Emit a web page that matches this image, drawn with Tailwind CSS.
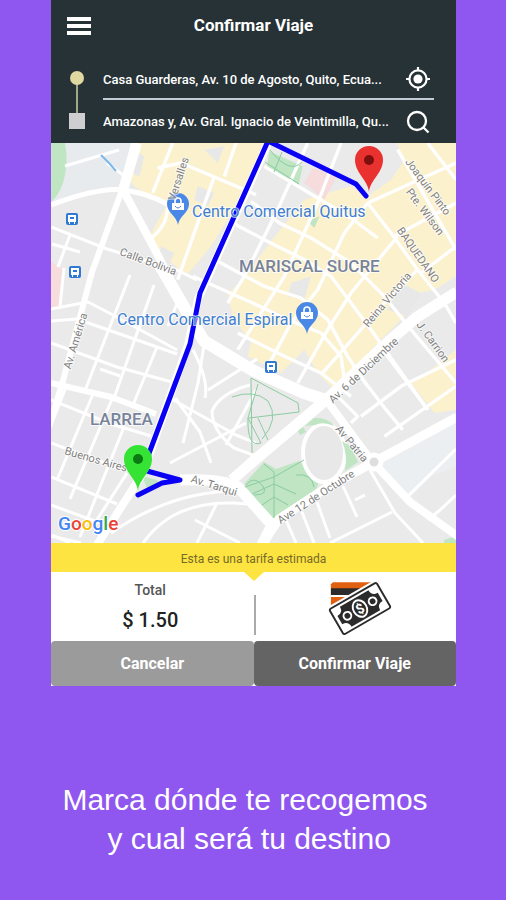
<!DOCTYPE html>
<html lang="es">
<head>
    <meta charset="UTF-8">
    <meta name="viewport" content="width=device-width, initial-scale=1.0">
    <title>Confirmar Viaje</title>
    <script src="https://cdn.jsdelivr.net/npm/@tailwindcss/browser@4"></script>
</head>
<body class="min-h-screen bg-[#8f57ef] font-['Roboto',sans-serif]">
    <main class="ml-[51px] mr-[50px]">
        <!-- Header -->
        <header class="bg-[#263236] text-white pb-1">
            <div class="grid grid-cols-[56px_1fr_56px] items-center h-13">
                <button type="button" aria-label="Menú" class="flex justify-center">
                    <svg class="w-6 h-5" viewBox="0 0 24 20" fill="#fff">
                        <path d="M0 1h24v4H0zM0 8h24v4H0zM0 15h24v4H0z"/>
                    </svg>
                </button>
                <h1 class="text-center text-[17px] font-bold">Confirmar Viaje</h1>
            </div>

            <!-- Origin / destination -->
            <form class="flex pr-[22px]">
                <svg class="w-13 h-[87px] shrink-0" viewBox="0 0 52 87">
                    <path d="M26 26v36" stroke="#a5a888" stroke-width="2"/>
                    <circle cx="26" cy="26" r="7" fill="#dfd8a0"/>
                    <rect x="18" y="61" width="16" height="16" fill="#cfcfd1"/>
                </svg>
                <div class="flex-1 min-w-0">
                    <div class="flex items-center justify-between h-12 pt-2 border-b-2 border-[#c3cbd6]">
                        <input type="text" aria-label="Origen" value="Casa Guarderas, Av. 10 de Agosto, Quito, Ecua..." class="flex-1 min-w-0 h-5 text-[13px] font-medium outline-none">
                        <button type="button" aria-label="Mi ubicación" class="mr-1">
                            <svg class="w-6 h-6" viewBox="0 0 24 24" fill="none" stroke="#fff" stroke-width="2.2">
                                <circle cx="12" cy="12" r="8.6"/>
                                <circle cx="12" cy="12" r="4.6" fill="#fff" stroke="none"/>
                                <path d="M12 0v4M12 20v4M0 12h4M20 12h4"/>
                            </svg>
                        </button>
                    </div>
                    <div class="flex items-center justify-between h-[39px] pt-1">
                        <input type="text" aria-label="Destino" value="Amazonas y, Av. Gral. Ignacio de Veintimilla, Qu..." class="flex-1 min-w-0 h-5 text-[13px] font-medium outline-none">
                        <button type="button" aria-label="Buscar" class="mr-1">
                            <svg class="w-6 h-6" viewBox="0 0 24 24" fill="none" stroke="#fff" stroke-width="2.3">
                                <circle cx="11" cy="11" r="9"/>
                                <path d="M17.5 17.5l5 5"/>
                            </svg>
                        </button>
                    </div>
                </div>
            </form>
        </header>

        <!-- Map -->
        <svg class="block w-full h-auto bg-[#eaeaea]" viewBox="51 143 405 400" role="img" aria-label="Mapa de la ruta">
            <!-- Areas -->
            <path d="M51 143h85l-15 46-26 2-44 14z" fill="#e8ebee"/>
            <path d="M51 143h14q4 20-2 40-4 12-12 19z" fill="#bfe5c3"/>
            <path d="M51 262l11 6-2 38-9 3z" fill="#f6dcdc"/>
            <path d="M378 465l78-46v48l-22 8-26 24z" fill="#eceff2"/>
            <path d="M245 483l19-21 12 7 23-8 20 20-3 9-44 29-9-4-20-21z" fill="#bfe5c3"/>
            <path d="M142 476l15 4 4 5-14 3zM444 540l12-4v7h-12z" fill="#bfe5c3"/>

            <!-- Shopping district, drawn at three times the scale -->
            <svg x="51" y="143" width="405" height="400" viewBox="0 0 1215 1200">
                <g fill="#fbf1cd">
                    <path d="M255 0H640L555 190 480 310 405 400 290 290 345 190 250 130 235 110z"/>
                    <path d="M1215 0H1040L1055 60 1020 110 950 160 900 130 760 170 680 270 650 310 555 430 530 450 545 520 600 600 590 640 690 690 760 620 800 690 850 740 980 600 1060 520 1100 450 1150 440 1215 400z"/>
                    <path d="M1080 720L1140 680 1215 620V800L1150 810z"/>
                </g>
                <path d="M250 20l30 20-15 60-25-10zM440 130l50 20-20 40-40-20zM330 310l40 20-20 40-30-10zM460 20l60-10-20 50zM720 420l60-20-20 70-50-10zM1050 420l60 30-40 70-60-20z" fill="#e8e8e8"/>
                <path d="M785 75l75 20-40 75-60-50z" fill="#f6dcdc"/>
                <path d="M655 25l100 45-12 55-95-50zM770 235l35-15-15 35z" fill="#bfe5c3"/>
                <g fill="none" stroke="#fff" stroke-width="10" stroke-linejoin="round">
                    <path d="M320 75l70-15 95 40 130 55M365 0l-60 150M490 100l-110 310M350 190q0 60-55 100M555 0l-35 100"/>
                    <path d="M640 70l110 65 150 90 80 60M600 175l85 65 95 45 120 75 100 100 80 100 135 160M545 240l95 50 120 60 80 50 60 80 60 80 170 240M500 355l140 75 110 35 80 65 60 110 60 90M425 400l180 80 105 50 100 40 60 70 10 70M560 570l140 70 110 50 90 70"/>
                    <path d="M950 180l70 90 80 110 80 100 35 60M1040 20l175 300M1130 0l85 110"/>
                    <path d="M870 0l-70 180-100 220-140 220M770 0l-90 200-100 200-50 80M950 180l-70 90-80 170-80 100-80 150M1040 280l-140 170-70 110-90 160M1100 380l-100 100-190 215M950 180l265-120M1030 280l185-100M1110 390l105-80"/>
                    <path d="M1215 650l-165 80-120 90M1215 730l-215 150M980 600l150 200M905 670l100 130 50 60M860 760l60 60-20 20"/>
                </g>
            </svg>

            <!-- Streets -->
            <g fill="none" stroke="#fff" stroke-width="3" stroke-linejoin="round">
                <path d="M51 227l56 22 70 21 20 10M51 309l37-7 29 15 60 33M51 321l26-2 40 14 60 21M51 343l66 24 55 15M52 244l28 8M100 369l20 7"/>
                <path d="M70 235l-12 32M64 268l-4 38M130 275l-44 113M154 285l-41 116M157 347l-24 58M180 296l-12 30M107 163l16 12M65 166l54-16"/>
                <path d="M193 350q16 30 12 48M208 390l49-31M250 385q-30 8-38 26 0 20 22 37l22 8M175 398l25 34 11 31M256 443l-20-8-68-38M204 345l-6 38-15 60M226 445l30-55M170 463l76-40"/>
                <path d="M51 400l60 24 40 12M51 443l75 28M51 477l66 27M51 505l60 22M93 394l-36 86M112 399l-42 100M124 427l-44 110M127 473l-34 53M66 387l-15 38"/>
                <path d="M111 533q60-42 126-42M143 543q30-42 90-40l17 1M195 520l45 23M217 503l-20 40M70 543l-18-8"/>
                <path d="M343 486l14 31M355 500l10-5M317 502l13 36M302 512l12 31M286 520l10 23M392 512l-62 31M370 470l25 43 28 30M408 496l48-47M428 520l12-10 16-15M51 536l30 7"/>
            </g>
            <g fill="none" stroke="#fff" stroke-linejoin="round">
                <path d="M51 205q48-18 72-15t44 14" stroke-width="5"/>
                <path d="M134 143l-12 47-30 82-28 105-15 50" stroke-width="6"/>
                <path d="M137 143l-14 47" stroke-width="10"/>
                <path d="M123 190l30 56 31 60" stroke-width="8"/>
                <path d="M158 262l26 45 20 34 50 30 50 22 25 8" stroke-width="12"/>
                <path d="M325 398l45 61 40 43 50 36" stroke-width="8"/>
                <path d="M51 383l60 14 45 17" stroke-width="6"/>
                <path d="M268 143l-70 156-10 46-45 128-48 75" stroke-width="8"/>
                <path d="M457 292l-40 25-28 24-62 58-77 65-18 16" stroke-width="11"/>
                <path d="M457 417l-83 45-48 26-47 31-16 24" stroke-width="9"/>
                <path d="M180 480q40-2 58 7l34 38-10 20" stroke-width="11"/>
                <ellipse cx="324" cy="453" rx="21" ry="29" fill="#e8e8e8" stroke-width="4"/>
                <circle cx="374" cy="462" r="7" fill="#dedede" stroke-width="5"/>
            </g>
            <!-- Green strips round the stadium -->
            <path d="M305 426l9-8q14-1 20 8-11-5-19-1zM298 431l5-4 3 5-6 3zM342 441l9 6 7 15-13 9q3-16-3-30z" fill="#bfe5c3"/>
            <!-- Paths inside the parks -->
            <g fill="none" stroke="#8ccba2" stroke-width="1">
                <path d="M251 378l1 75M251 378l47 25 1 9-50 6M258 384l-10 34q-1 30 13 25l-13-25M232 397q22-8 36 4 12 18-6 38M258 418l10 22"/>
                <path d="M264 464l10 8v46M245 487l29-10 30-17M252 494l22-10 22 10M262 505l12-8 14 8M296 475q16-2 18 12M246 485q8-10 16 0t-8 10M270 150q20 25 32 12M265 162l34 22M282 152l-8 20"/>
            </g>
            <path d="M101 155l8 8 7 8" stroke="#7db8ec" stroke-width="2" fill="none"/>

            <!-- Transit stops -->
            <defs>
                <g id="stop">
                    <rect x="-6" y="-6" width="12" height="12" rx="2" fill="#2f79d3"/>
                    <path d="M-4-4h8v7h-1v2h-1v-2h-4v2h-1v-2h-1z" fill="#fff"/>
                    <path d="M-2-2h4v2h-4z" fill="#2f79d3"/>
                </g>
                <g id="shop">
                    <path d="M0 20C-1 11-11 8-11-1a11 11 0 0122 0C11 8 1 11 0 20z" fill="#4a88e8"/>
                    <path d="M-6-2H6v7H-6z" fill="#fff"/>
                    <path d="M-3-2v-2a3 3 0 016 0v2" fill="none" stroke="#fff" stroke-width="1.6"/>
                    <path d="M-3 1q3 4 6 0" fill="none" stroke="#4a88e8"/>
                </g>
                <path id="pin" d="M0 32C-1 20-14 13-14 0a14 14 0 0128 0C14 13 1 20 0 32z"/>
            </defs>
            <use href="#stop" x="72" y="219"/>
            <use href="#stop" x="75" y="272"/>
            <use href="#stop" x="271" y="367"/>
            <use href="#shop" x="178" y="205"/>
            <use href="#shop" x="307" y="314"/>

            <!-- Route -->
            <path d="M366 196l-10-12-88-43-68 152-10 51-42 112M147 471l33 9-18 3-24 12" fill="none" stroke="#0a00f5" stroke-width="5" stroke-linejoin="round" stroke-linecap="round"/>

            <!-- Street names -->
            <g fill="#808080" font-size="11" stroke="#fff" stroke-opacity="0.7" stroke-width="2" paint-order="stroke" text-anchor="middle">
                <text transform="translate(182 180) rotate(-72)">Versalles</text>
                <text transform="translate(147 265) rotate(20)">Calle Bolivia</text>
                <text transform="translate(79 342) rotate(-73)">Av. América</text>
                <text transform="translate(95 463) rotate(16)">Buenos Aires</text>
                <text transform="translate(213 489) rotate(17)">Av. Tarqui</text>
                <text transform="translate(318 500) rotate(-33)">Ave 12 de Octubre</text>
                <text transform="translate(349 446) rotate(50)">Av Patria</text>
                <text transform="translate(366 373) rotate(-43)">Av. 6 de Diciembre</text>
                <text transform="translate(390 302) rotate(-50)">Reina Victoria</text>
                <text transform="translate(430 344) rotate(54)">J. Carrion</text>
                <text transform="translate(415 257) rotate(55)">BAQUEDANO</text>
                <text transform="translate(422 214) rotate(53)">Pte. Wilson</text>
                <text transform="translate(425 189) rotate(53)">Joaquín Pinto</text>
            </g>
            <g fill="#77839a" font-size="17" font-weight="500" stroke="#fff" stroke-opacity="0.7" stroke-width="2" paint-order="stroke">
                <text x="239" y="272">MARISCAL SUCRE</text>
                <text x="90" y="425">LARREA</text>
            </g>
            <g fill="#3f7fd0" font-size="16" stroke="#fff" stroke-opacity="0.7" stroke-width="2" paint-order="stroke">
                <text x="192" y="217">Centro Comercial Quitus</text>
                <text x="117" y="325">Centro Comercial Espiral</text>
            </g>

            <!-- Pins -->
            <use href="#pin" x="369" y="160" fill="#e9322f"/>
            <circle cx="369" cy="160" r="5" fill="#7d100e"/>
            <use href="#pin" x="138" y="459" fill="#35e335"/>
            <circle cx="138" cy="459" r="5" fill="#0c7a12"/>

            <text x="58" y="530" font-size="19" font-weight="500" stroke="#fff" stroke-width="2" paint-order="stroke"><tspan fill="#4285f4">G</tspan><tspan fill="#ea4335">o</tspan><tspan fill="#fbbc05">o</tspan><tspan fill="#4285f4">g</tspan><tspan fill="#34a853">l</tspan><tspan fill="#ea4335">e</tspan></text>
        </svg>

        <!-- Fare -->
        <section class="bg-white">
            <p class="relative h-[29px] bg-[#fee440] text-center text-xs leading-8 text-[#756a2c]">
                Esta es una tarifa estimada
                <svg class="absolute top-full left-1/2 -translate-x-1/2 w-5 h-[9px]" viewBox="0 0 20 9" fill="#fee440"><path d="M0 0h20L10 9z"/></svg>
            </p>
            <div class="grid grid-cols-2 h-[69px]">
                <div class="flex flex-col items-center pt-2 pr-1">
                    <span class="text-sm leading-5 font-medium text-[#555]">Total</span>
                    <span class="mt-2 text-xl leading-6 font-medium text-[#222]">$ 1.50</span>
                </div>
                <div class="flex items-center">
                    <span class="w-0.5 h-10 mt-4 bg-[#aaa]"></span>
                    <svg class="w-16 h-14 ml-[72px] mt-1" viewBox="328 580 66 57" role="img" aria-label="Tarjeta o efectivo">
                        <path d="M333 581h42v24h-44v-22z" fill="#e0600f"/>
                        <path d="M331 587h45v7h-45z" fill="#2b2b2b"/>
                        <path d="M331 594h40v2h-40z" fill="#fff"/>
                        <g transform="translate(361 608) rotate(-30)">
                            <rect x="-31" y="-18" width="62" height="36" rx="2" fill="#fff"/>
                            <rect x="-28" y="-15" width="56" height="30" rx="2" fill="#fff" stroke="#2b2b2b" stroke-width="2"/>
                            <path d="M-17-12h34q0 7 7 7v10q-7 0-7 7h-34q0-7-7-7v-10q7 0 7-7z" fill="#2b2b2b"/>
                            <ellipse rx="7" ry="9" fill="#2b2b2b" stroke="#fff" stroke-width="2"/>
                            <circle cx="-15" r="4" fill="#2b2b2b" stroke="#fff" stroke-width="2"/>
                            <circle cx="15" r="4" fill="#2b2b2b" stroke="#fff" stroke-width="2"/>
                            <text y="5" text-anchor="middle" font-size="14" font-weight="700" fill="#fff">$</text>
                        </g>
                    </svg>
                </div>
            </div>
            <div class="grid grid-cols-2 h-[45px] text-base font-bold text-white">
                <button type="button" class="rounded-sm bg-[#9b9b9b]">Cancelar</button>
                <button type="button" class="rounded-sm bg-[#646464]">Confirmar Viaje</button>
            </div>
        </section>
    </main>

    <p class="mt-[94px] pr-4 text-center text-[30px] leading-[39px] text-white font-['Liberation_Sans',sans-serif]">Marca dónde te recogemos<br>&nbsp;y cual será tu destino</p>
</body>
</html>
